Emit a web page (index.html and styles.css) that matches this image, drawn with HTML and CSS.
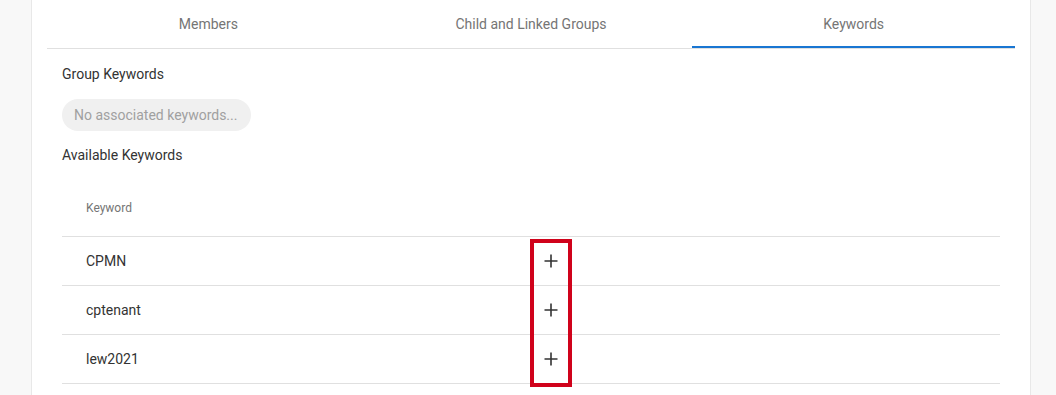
FILE: index.html
```html
<!DOCTYPE html>
<html>
<head>
    <title>Group Keywords</title>
    <link rel="stylesheet" href="styles.css">
</head>
<body>
    <div class="page">
        <div class="card">
            <div class="tabs">
                <div class="tab">Members</div>
                <div class="tab">Child and Linked Groups</div>
                <div class="tab active">Keywords</div>
            </div>
            <div class="content">
                <div class="section-title">Group Keywords</div>
                <div class="chip">No associated keywords...</div>
                <div class="section-title available">Available Keywords</div>
                <div class="table">
                    <div class="row head">
                        <div class="cell name">Keyword</div>
                        <div class="cell action"></div>
                    </div>
                    <div class="row">
                        <div class="cell name">CPMN</div>
                        <div class="cell action">
                            <svg class="plus" width="24" height="24" viewBox="0 0 24 24"><path d="M12 5.5v13M5.5 12h13"/></svg>
                        </div>
                    </div>
                    <div class="row">
                        <div class="cell name">cptenant</div>
                        <div class="cell action">
                            <svg class="plus" width="24" height="24" viewBox="0 0 24 24"><path d="M12 5.5v13M5.5 12h13"/></svg>
                        </div>
                    </div>
                    <div class="row">
                        <div class="cell name">lew2021</div>
                        <div class="cell action">
                            <svg class="plus" width="24" height="24" viewBox="0 0 24 24"><path d="M12 5.5v13M5.5 12h13"/></svg>
                        </div>
                    </div>
                    <div class="highlight"></div>
                </div>
            </div>
        </div>
    </div>
</body>
</html>
```
FILE: styles.css
```css
body {
    margin: 0;
    background-color: #f8f8f8;
    font-family: Roboto, "Liberation Sans", Arial, sans-serif;
    color: #333333;
    font-size: 14px;
}

.page {
    padding: 0 25px 0 31px;
}

.card {
    background-color: #ffffff;
    border-left: 1px solid #e8e8e8;
    border-right: 1px solid #e8e8e8;
    padding: 0 15px;
    min-height: 100vh;
    box-sizing: border-box;
}

.tabs {
    display: grid;
    grid-template-columns: 1fr 1fr 1fr;
    border-bottom: 1px solid #e0e0e0;
}

.tab {
    height: 48px;
    line-height: 48px;
    text-align: center;
    color: #757575;
}

.tab.active {
    box-shadow: inset 0 -2px 0 #1976d2;
}

.content {
    padding: 15px 15px 0 15px;
}

.section-title {
    line-height: 20px;
    color: #333333;
}

.chip {
    display: inline-block;
    margin-top: 15px;
    height: 32px;
    line-height: 32px;
    padding: 0 14px 0 12px;
    border-radius: 16px;
    background-color: #f0f0f0;
    color: #a0a0a0;
}

.available {
    margin-top: 14px;
}

.table {
    position: relative;
    margin-top: 15px;
}

.row {
    display: flex;
    height: 49px;
    border-bottom: 1px solid #e0e0e0;
    box-sizing: border-box;
    align-items: center;
}

.row.head {
    height: 57px;
    font-size: 12px;
    color: #757575;
}

.cell.name {
    width: 50%;
    padding-left: 24px;
    box-sizing: border-box;
}

.cell.action {
    padding-left: 8px;
    display: flex;
}

.plus path {
    stroke: #333333;
    stroke-width: 1.6;
    fill: none;
}

.highlight {
    position: absolute;
    left: 468px;
    top: 59px;
    width: 42px;
    height: 148px;
    border: 4px solid #d0021b;
    box-sizing: border-box;
}
```
